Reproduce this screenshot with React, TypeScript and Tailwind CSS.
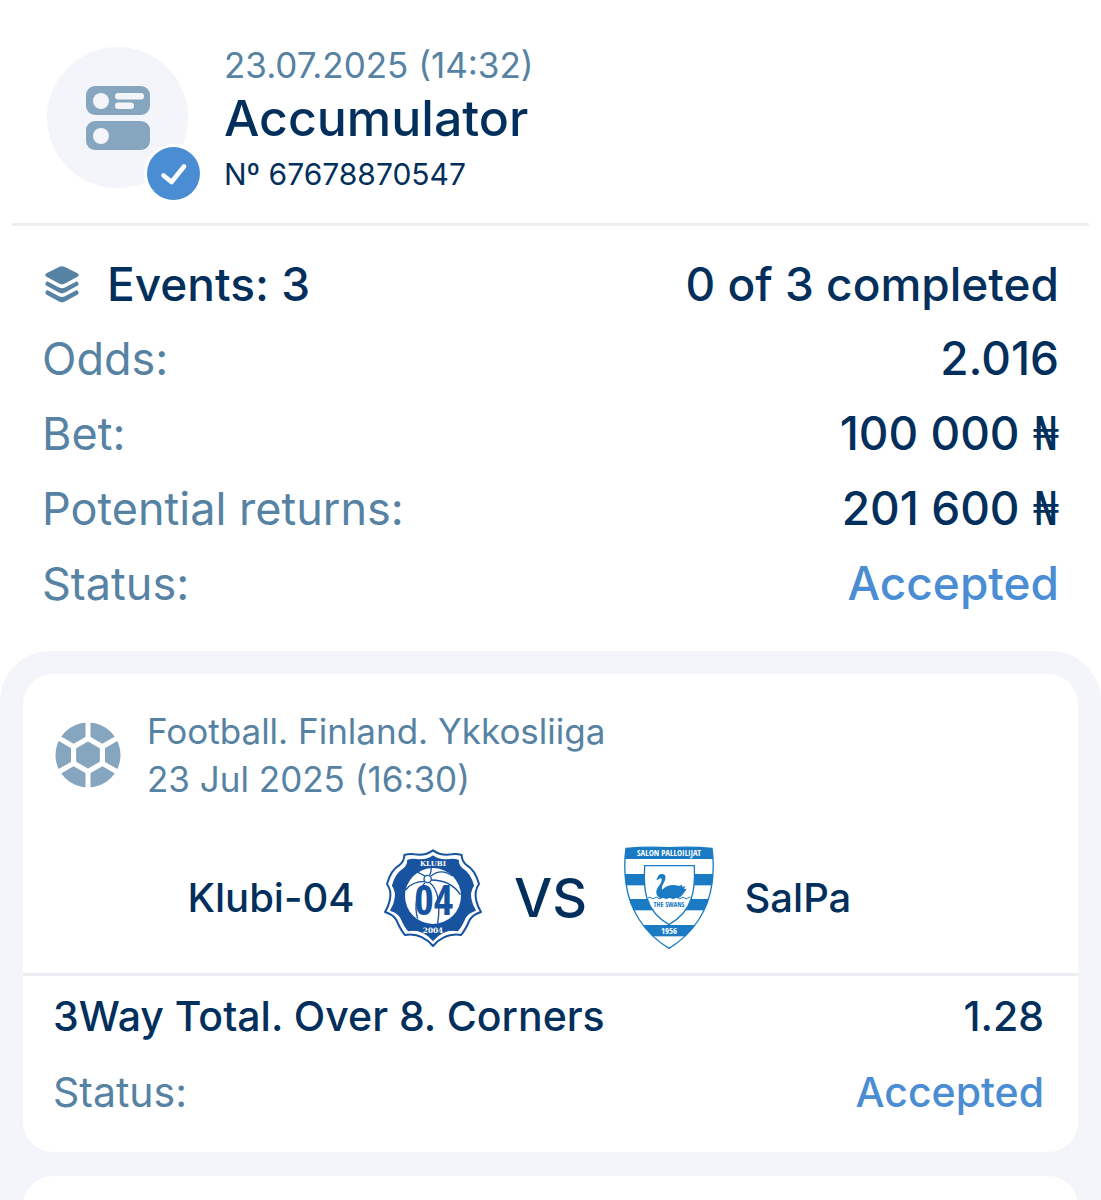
import React from 'react';
import { clsx } from 'clsx';

const summary = [
  { label: 'Odds:', value: '2.016' },
  { label: 'Bet:', value: '100 000', currency: true },
  { label: 'Potential returns:', value: '201 600', currency: true },
  { label: 'Status:', value: 'Accepted', accent: true },
];

const CouponIcon: React.FC = () => (
  <svg viewBox="0 0 64 64" className="w-16 h-16" aria-hidden="true">
    <rect width="64" height="29" rx="9" fill="#86a5be" />
    <rect y="35" width="64" height="29" rx="9" fill="#86a5be" />
    <circle cx="15" cy="15" r="8" fill="#f3f5fa" />
    <circle cx="15" cy="50" r="8" fill="#f3f5fa" />
    <rect x="29" y="7" width="29" height="6.5" rx="3.2" fill="#f3f5fa" />
    <rect x="29" y="16.5" width="19" height="6.5" rx="3.2" fill="#f3f5fa" />
  </svg>
);

const CheckIcon: React.FC = () => (
  <svg viewBox="0 0 53 53" className="w-full h-full" aria-hidden="true">
    <path
      d="M16.500 28.500L24.500 35L37 19.500"
      fill="none"
      stroke="#fff"
      strokeWidth="4.6"
      strokeLinecap="round"
      strokeLinejoin="round"
    />
  </svg>
);

const LayersIcon: React.FC = () => (
  <svg viewBox="0 0 34 37" className="w-[34px] h-[37px]" fill="#5682a3" aria-hidden="true">
    <path d="M14.6.8Q17-.3 19.400.8L32.500 7.200Q35 9 32.500 10.800L20 17.600Q17 19.200 14 17.600L1.500 10.800Q-1 9 1.500 7.200Z" />
    <path d="M2.200 15.300L14 21.400Q17 23 20 21.400L31.800 15.300Q34.800 17.600 32.800 19.600L20 26.600Q17 28.200 14 26.600L1.200 19.600Q-.8 17.600 2.200 15.300Z" />
    <path d="M2.200 24.100L14 30.200Q17 31.800 20 30.200L31.800 24.100Q34.800 26.400 32.800 28.400L20 35.600Q17 37.200 14 35.600L1.200 28.400Q-.8 26.400 2.200 24.100Z" />
  </svg>
);

const FootballIcon: React.FC = () => (
  <svg viewBox="-33 -33 66 66" className="w-[66px] h-[66px] shrink-0" aria-hidden="true">
    <circle r="32.500" fill="#86a5be" />
    <path
      d="M0-34V34M-29.400-17L29.400 17M-29.400 17L29.400-17"
      stroke="#fff"
      strokeWidth="5"
    />
    <path d="M0-19L16.500-9.500V9.500L0 19L-16.500 9.500V-9.500Z" fill="#fff" stroke="#fff" strokeLinejoin="round" />
    <path
      d="M0-13L11.300-6.500V6.500L0 13L-11.300 6.500V-6.500Z"
      fill="#86a5be"
      stroke="#86a5be"
      strokeLinejoin="round"
    />
  </svg>
);

const klubiOutline =
  'M188 45C172 57 152 60 132 57C122 55 112 56 102 59C102 72 96 83 86 90C70 99 58 118 50 146C60 160 62 180 58 196C55 210 50 220 44 230C60 235 71 242 78 254C85 270 92 286 104 299C130 295 162 302 188 332C214 302 246 295 272 299C284 286 291 270 298 254C305 242 316 235 332 230C326 220 321 210 318 196C314 180 316 160 326 146C318 118 306 99 290 90C280 83 274 72 274 59C264 56 254 55 244 57C224 60 204 57 188 45Z';

const KlubiLogo: React.FC = () => (
  <svg viewBox="32 32 312 312" className="w-[104px] h-[104px]" role="img" aria-label="Klubi-04 crest">
    <path d={klubiOutline} fill="#fff" stroke="#17539f" strokeWidth="6" strokeLinejoin="round" />
    <path
      d={klubiOutline}
      fill="#17539f"
      stroke="#17539f"
      strokeWidth="4"
      strokeLinejoin="round"
      transform="translate(188 189) scale(.88) translate(-188 -189)"
    />
    <circle cx="188" cy="182" r="84" fill="#fff" />
    <g fill="none" stroke="#17539f" strokeWidth="4">
      <path d="M166 124C150 114 142 108 132 110M164 138C136 138 118 148 106 164M178 120C182 110 184 104 182 96M182 122C204 104 224 106 246 122M182 134C220 134 252 150 270 178M178 142C200 158 212 200 202 264M164 142C140 170 130 210 142 250" />
      <circle cx="172" cy="131" r="11" fill="#fff" />
    </g>
    <text
      x="190"
      y="238"
      textAnchor="middle"
      fontSize="126"
      fontWeight="800"
      fill="#17539f"
      className="font-['Open_Sans_Condensed','Liberation_Sans_Narrow',sans-serif]"
    >
      04
    </text>
    <text
      x="188"
      y="91"
      textAnchor="middle"
      fontSize="21"
      fontWeight="700"
      fill="#fff"
      className="font-['DejaVu_Serif',serif]"
    >
      KLUBI
    </text>
    <text
      x="188"
      y="294"
      textAnchor="middle"
      fontSize="22"
      fontWeight="700"
      fill="#fff"
      className="font-['DejaVu_Serif',serif]"
    >
      2004
    </text>
  </svg>
);

const salpaShield =
  'M48 40Q112 34 177 38Q242 34 306 40C312 80 310 116 306 146C296 220 254 294 177 340C100 294 58 220 48 146C44 116 42 80 48 40Z';

const SalpaLogo: React.FC = () => (
  <svg viewBox="21 33 312 312" className="w-[104px] h-[104px]" role="img" aria-label="SalPa crest">
    <defs>
      <clipPath id="salpa-shield">
        <path d={salpaShield} />
      </clipPath>
    </defs>
    <path d={salpaShield} fill="#fff" />
    <g clipPath="url(#salpa-shield)" fill="#1a7bc4">
      <rect x="40" y="34" width="280" height="38" />
      <rect x="40" y="117" width="280" height="34" />
      <rect x="40" y="192" width="280" height="34" />
      <rect x="40" y="270" width="280" height="34" />
    </g>
    <path d={salpaShield} fill="none" stroke="#1a7bc4" strokeWidth="4" />
    <path
      d="M104 92H253C256 160 252 226 177 269C102 226 100 160 104 92Z"
      fill="#fff"
      stroke="#1a7bc4"
      strokeWidth="4"
    />
    <path
      d="M139 136C143 126 146 117 155 117C168 116 169 130 163 140C157 150 153 158 157 164C168 152 188 146 206 153L217 149L216 156L226 153L222 161L230 162C222 174 216 184 206 189H150C136 182 136 166 146 154C153 145 158 134 153 129C150 131 144 133 139 136Z"
      fill="#1a7bc4"
    />
    <path d="M114 189q5-5 10 0t10 0t10 0t10 0t10 0t10 0t10 0t10 0t10 0t10 0t10 0t10 0t8 0" fill="none" stroke="#1a7bc4" strokeWidth="3" />
    <text
      x="177"
      y="64"
      textAnchor="middle"
      fontSize="26"
      fontWeight="800"
      fill="#fff"
      className="font-['Open_Sans_Condensed','Liberation_Sans_Narrow',sans-serif]"
    >
      SALON PALLOILIJAT
    </text>
    <text
      x="177"
      y="215"
      textAnchor="middle"
      fontSize="21"
      fontWeight="700"
      fill="#1a7bc4"
      className="font-['Open_Sans_Condensed','Liberation_Sans_Narrow',sans-serif]"
    >
      THE SWANS
    </text>
    <text
      x="177"
      y="297"
      textAnchor="middle"
      fontSize="26"
      fontWeight="700"
      fill="#fff"
      className="font-['Open_Sans_Condensed','Liberation_Sans_Narrow',sans-serif]"
    >
      1956
    </text>
  </svg>
);

const App: React.FC = () => {
  return (
    <main className="min-h-screen bg-white font-['Inter',sans-serif] text-[#022f5b]">
      {/* Coupon header */}
      <header className="mx-3 flex items-start gap-9 border-b-3 border-[#ebedf0] pt-11 pb-[25px] pl-[35px]">
        <div className="relative mt-[3px] flex h-[141px] w-[141px] shrink-0 items-center justify-center rounded-full bg-[#f3f5fa]">
          <CouponIcon />
          <div className="absolute -right-3 -bottom-3 h-[53px] w-[53px] rounded-full bg-[#4a8dd3] ring-3 ring-white">
            <CheckIcon />
          </div>
        </div>
        <div>
          <p className="text-[35px] leading-[42px] text-[#5682a3]">23.07.2025 (14:32)</p>
          <h1 className="text-[50px] leading-[64px] font-medium">Accumulator</h1>
          <p className="text-[30px] leading-[48px]">Nº 67678870547</p>
        </div>
      </header>

      {/* Bet summary */}
      <section className="px-[42px] pt-[21px] pb-[30px] text-[46px] leading-[74px] font-medium">
        <div className="flex items-center justify-between">
          <h2 className="flex items-center gap-7 pl-[3px]">
            <LayersIcon />
            Events: 3
          </h2>
          <span>0 of 3 completed</span>
        </div>
        {summary.map((row) => (
          <div key={row.label} className="flex items-baseline justify-between">
            <span className="text-[45px] font-normal text-[#5682a3]">{row.label}</span>
            <span className={clsx(row.accent && 'text-[#4a8dd3]')}>
              {row.value}
              {row.currency && (
                <span className="font-['DejaVu_Sans_Condensed','DejaVu_Sans',sans-serif] font-normal"> ₦</span>
              )}
            </span>
          </div>
        ))}
      </section>

      {/* Events */}
      <section className="space-y-6 rounded-t-[50px] bg-[#f3f5fa] px-[23px] pt-[23px]">
        <article className="rounded-[30px] bg-white pb-[22px]">
          <div className="flex items-center gap-[26px] px-8 pt-[33px]">
            <FootballIcon />
            <div className="text-[35px] leading-12 text-[#5682a3]">
              <p>Football. Finland. Ykkosliiga</p>
              <p>23 Jul 2025 (16:30)</p>
            </div>
          </div>

          <div className="flex items-center border-b-3 border-[#ebedf0] pt-[43px] pb-[23px] text-[40px] font-medium">
            <div className="flex flex-1 items-center justify-end gap-[26px]">
              <span>Klubi-04</span>
              <KlubiLogo />
            </div>
            <span className="w-[132px] text-center text-[54px] leading-[60px] font-medium">VS</span>
            <div className="flex flex-1 items-center gap-6">
              <SalpaLogo />
              <span>SalPa</span>
            </div>
          </div>

          <div className="pt-[2px] pr-[34px] pl-[30px] text-[41px] leading-[76px] font-medium">
            <div className="flex justify-between">
              <span>3Way Total. Over 8. Corners</span>
              <span>1.28</span>
            </div>
            <div className="flex justify-between">
              <span className="font-normal text-[#5682a3]">Status:</span>
              <span className="text-[#4a8dd3]">Accepted</span>
            </div>
          </div>
        </article>
        <div className="h-[25px] overflow-hidden">
          <div className="h-20 rounded-[30px] bg-white" />
        </div>
      </section>
    </main>
  );
};

export default App;
